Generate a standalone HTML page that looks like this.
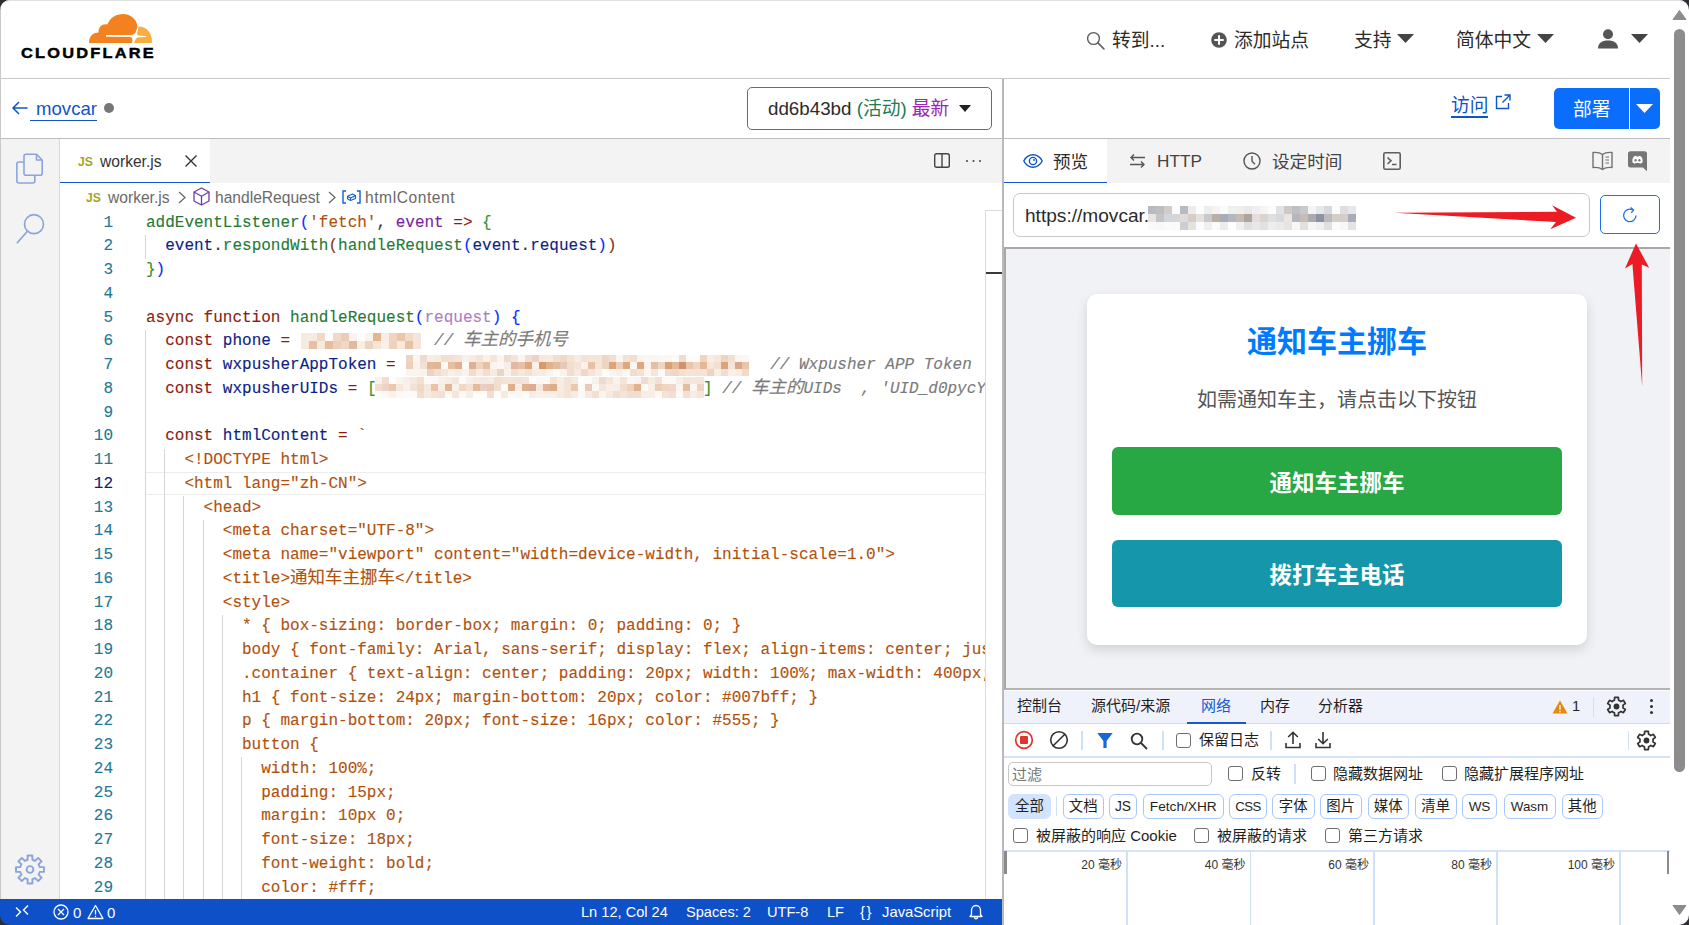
<!DOCTYPE html>
<html lang="zh-CN">
<head>
<meta charset="UTF-8">
<title>movcar - Cloudflare Workers</title>
<style>
*{box-sizing:border-box;margin:0;padding:0}
html,body{width:1689px;height:925px;overflow:hidden;background:#fff}
body{position:relative;font-family:"Liberation Sans","Noto Sans CJK SC",sans-serif;color:#313131}
.abs{position:absolute}
.t{position:absolute;white-space:nowrap;line-height:1}
svg{position:absolute;overflow:visible}
/* header */
#hdr{left:0;top:0;width:1670px;height:79px;border-bottom:1px solid #c8c8c8;background:#fff}
#sub{left:0;top:79px;width:1670px;height:60px;border-bottom:1px solid #bdbdbd;background:#fff}
.nav{font-size:18.75px;color:#2b2b2b}
/* editor */
#ed{left:0;top:139px;width:1002px;height:786px;background:#fff;overflow:hidden}
#act{left:0;top:0;width:60px;height:760px;background:#f3f3f3;border-right:1px solid #d9d9d9}
#tabs{left:60px;top:0;width:942px;height:44px;background:#f3f3f3}
#tab1{left:0;top:0;width:150px;height:44px;background:#fff;border-bottom:1.5px solid #0f55c9}
#status{left:0;top:760px;width:1002px;height:26px;background:#0e50c8;color:#fff;font-size:15px}
.code{font-family:"Liberation Mono","Noto Sans CJK SC",monospace;font-size:16px;line-height:23.75px;white-space:pre}
#ln{left:60px;top:72.6px;width:53px;text-align:right;color:#237893;-webkit-text-stroke:0.1px}
#src{left:146px;top:72.6px;width:840px;overflow:hidden;color:#b1500b;-webkit-text-stroke:0.12px}
#src i{font-style:italic;color:#7a7a7a}
.cj{font-size:17.5px;line-height:1}
.k{color:#8a1c10}.v{color:#0b2384}.f{color:#1f7a36}.s{color:#b1500b}.p{color:#7a1fa0}.o{color:#333}
.b1{color:#0431fa}.b2{color:#319331}.b3{color:#7b3814}
.g{position:absolute;width:1px;background:#d6d6d6}
/* right */
#rp{left:1004px;top:139px;width:666px;height:786px;background:#fff;overflow:hidden}
#vdiv{left:1002px;top:79px;width:2px;height:846px;background:#b9b9b9}
.dt{font-size:15px;color:#1f1f1f}
.chip{position:absolute;top:655px;height:25px;white-space:nowrap;border:1px solid #a8c7fa;border-radius:6px;font-size:14.4px;line-height:23px;text-align:center;color:#1f1f1f;background:#fff}
.cb{position:absolute;width:15px;height:15px;border:1.5px solid #6e6e6e;border-radius:3px;background:#fff}
</style>
</head>
<body>
<svg width="0" height="0" style="left:0;top:0"><defs><g id="dgear"><path d="M-2.08 -6.26L-1.85 -9.11L1.85 -9.11L2.08 -6.26A6.6 6.6 0 0 1 4.39 -4.93L4.39 -4.93L6.97 -6.16L8.82 -2.96L6.46 -1.33A6.6 6.6 0 0 1 6.46 1.33L6.46 1.33L8.82 2.96L6.97 6.16L4.39 4.93A6.6 6.6 0 0 1 2.08 6.26L2.08 6.26L1.85 9.11L-1.85 9.11L-2.08 6.26A6.6 6.6 0 0 1 -4.39 4.93L-4.39 4.93L-6.97 6.16L-8.82 2.96L-6.46 1.33A6.6 6.6 0 0 1 -6.46 -1.33L-6.46 -1.33L-8.82 -2.96L-6.97 -6.16L-4.39 -4.93A6.6 6.6 0 0 1 -2.08 -6.26Z" fill="none" stroke="#333" stroke-width="1.7" stroke-linejoin="round"/><circle r="2.9" fill="#333"/></g></defs></svg>
<!-- HEADER -->
<div id="hdr" class="abs">
  <svg style="left:89px;top:14px" width="64" height="29" viewBox="0 0 64 29">
    <path d="M0 29 C0 22 4 18.5 9.5 18.5 C9.5 13 13 9.5 18.5 10.5 C21 3.5 27 0 34 0 C42 0 48 5.5 48.5 13 L47 17 C46.5 19.5 45 20.8 42.5 20.9 L17 21.1 L17 22.8 L41 22.9 C43.5 23 44 25.5 43 29 Z" fill="#f4811f"/>
    <path d="M49.5 12.5 C57 12.5 63 18.5 63 27 L62.6 29 L45 29 C46 27 46.5 24.5 48.5 23.6 L57 23 L57 22 L49 21.6 L48 20 Z" fill="#faad3f"/>
  </svg>
  <div class="t" style="left:21px;top:46px;font-size:14.6px;font-weight:bold;letter-spacing:2px;color:#000;-webkit-text-stroke:0.45px #000;transform:scaleX(1.12);transform-origin:0 0">CLOUDFLARE</div>
  <svg style="left:1086px;top:31px" width="19" height="19" viewBox="0 0 19 19"><circle cx="7.5" cy="7.5" r="5.9" fill="none" stroke="#5c5c5c" stroke-width="1.4"/><path d="M11.9 11.9L18 18" stroke="#5c5c5c" stroke-width="1.6" stroke-linecap="round"/></svg>
  <div class="t nav" style="left:1112px;top:32px">转到...</div>
  <svg style="left:1211px;top:31.5px" width="16" height="16" viewBox="0 0 16 16"><circle cx="8" cy="8" r="7.8" fill="#555"/><path d="M8 3.3v9.4M3.3 8h9.4" stroke="#fff" stroke-width="2"/></svg>
  <div class="t nav" style="left:1234px;top:32px">添加站点</div>
  <div class="t nav" style="left:1354px;top:32px">支持</div>
  <svg style="left:1397px;top:34px" width="17" height="9" viewBox="0 0 17 9"><path d="M0 0H17L8.5 9Z" fill="#444"/></svg>
  <div class="t nav" style="left:1456px;top:32px">简体中文</div>
  <svg style="left:1537px;top:34px" width="17" height="9" viewBox="0 0 17 9"><path d="M0 0H17L8.5 9Z" fill="#444"/></svg>
  <svg style="left:1598px;top:29px" width="20" height="20" viewBox="0 0 20 20"><circle cx="10" cy="5.2" r="5" fill="#555"/><path d="M0 19.5C0 14 4 11.5 10 11.5S20 14 20 19.5Z" fill="#555"/></svg>
  <svg style="left:1631px;top:34px" width="17" height="9" viewBox="0 0 17 9"><path d="M0 0H17L8.5 9Z" fill="#444"/></svg>
</div>
<div id="sub" class="abs">
  <svg style="left:12px;top:22px" width="16" height="14" viewBox="0 0 16 14"><path d="M15.5 7H1.5M7 1L1 7L7 13" fill="none" stroke="#0f55c9" stroke-width="1.5"/></svg>
  <div class="t" style="left:36px;top:21px;font-size:18.6px;color:#0f55c9">movcar</div>
  <div class="abs" style="left:30px;top:40.5px;width:67px;height:1px;background:#0f55c9"></div>
  <div class="abs" style="left:104px;top:24px;width:10px;height:10px;border-radius:50%;background:#777"></div>
  <div class="abs" style="left:747px;top:8px;width:245px;height:43px;border:1px solid #6b6b6b;border-radius:5px;background:#fff"></div>
  <div class="t" style="left:768px;top:20.5px;font-size:18.75px;color:#2b2b2b">dd6b43bd <span style="color:#1c7c54">(活动)</span> <span style="color:#9a27b0">最新</span></div>
  <svg style="left:959px;top:26px" width="12" height="7" viewBox="0 0 12 7"><path d="M0 0H12L6 7Z" fill="#222"/></svg>
  <div class="t" style="left:1451px;top:17.5px;font-size:18.75px;color:#0f55c9">访问</div>
  <div class="abs" style="left:1451px;top:37px;width:37px;height:1.5px;background:#0f55c9"></div>
  <svg style="left:1495px;top:15px" width="16" height="16" viewBox="0 0 16 16"><path d="M7 2.5H1.5V14.5H13.5V9" fill="none" stroke="#0f55c9" stroke-width="1.4"/><path d="M9.5 1H15V6.5M15 1L7.5 8.5" fill="none" stroke="#0f55c9" stroke-width="1.4"/></svg>
  <div class="abs" style="left:1554px;top:9px;width:106px;height:41px;border-radius:5px;background:#0a6dfc"></div>
  <div class="abs" style="left:1628.6px;top:9px;width:1.1px;height:41px;background:#fff"></div>
  <div class="t" style="left:1573px;top:22px;font-size:18.75px;color:#fff">部署</div>
  <svg style="left:1636px;top:25px" width="17" height="9" viewBox="0 0 17 9"><path d="M0 0H17L8.5 9Z" fill="#fff"/></svg>
</div>
<div id="vdiv" class="abs"></div>
<!-- EDITOR -->
<div id="ed" class="abs">
  <div id="act" class="abs">
    <svg style="left:16px;top:13px" width="28" height="34" viewBox="0 0 28 34" fill="none" stroke="#8ba5db" stroke-width="1.6" stroke-linejoin="round"><rect x="0.9" y="10" width="17.9" height="21" rx="2"/><path d="M10 2.3H20.5L26.2 8V21.3A2 2 0 0 1 24.2 23.3H10A2 2 0 0 1 8 21.3V4.3A2 2 0 0 1 10 2.3Z" fill="#f3f3f3"/><path d="M20.5 2.6V8H25.9"/></svg>
    <svg style="left:16px;top:73px" width="29" height="32" viewBox="0 0 29 32" fill="none" stroke="#8ba5db" stroke-width="1.7" stroke-linecap="round"><circle cx="18" cy="12.2" r="9.5"/><path d="M11.2 19.5L1.3 30.7"/></svg>
    <svg style="left:15px;top:714.8px" width="30" height="31" viewBox="-15 -15.5 30 31" fill="none" stroke="#8ba5db" stroke-width="1.9" stroke-linejoin="round"><circle r="3.4"/><path d="M-2.38 -9.71L-2.40 -14.00L2.40 -14.00L2.38 -9.71A10.0 10.0 0 0 1 5.19 -8.55L5.19 -8.55L8.20 -11.59L11.59 -8.20L8.55 -5.19A10.0 10.0 0 0 1 9.71 -2.38L9.71 -2.38L14.00 -2.40L14.00 2.40L9.71 2.38A10.0 10.0 0 0 1 8.55 5.19L8.55 5.19L11.59 8.20L8.20 11.59L5.19 8.55A10.0 10.0 0 0 1 2.38 9.71L2.38 9.71L2.40 14.00L-2.40 14.00L-2.38 9.71A10.0 10.0 0 0 1 -5.19 8.55L-5.19 8.55L-8.20 11.59L-11.59 8.20L-8.55 5.19A10.0 10.0 0 0 1 -9.71 2.38L-9.71 2.38L-14.00 2.40L-14.00 -2.40L-9.71 -2.38A10.0 10.0 0 0 1 -8.55 -5.19L-8.55 -5.19L-11.59 -8.20L-8.20 -11.59L-5.19 -8.55A10.0 10.0 0 0 1 -2.38 -9.71Z"/></svg>
  </div>
  <div id="tabs" class="abs"><div id="tab1" class="abs"></div>
    <div class="t" style="left:18px;top:15px;font-size:12.2px;font-weight:bold;color:#a8a31e;margin-top:1.5px">JS</div>
    <div class="t" style="left:40px;top:15px;font-size:15.6px;color:#333">worker.js</div>
    <svg style="left:125px;top:16px" width="12" height="12" viewBox="0 0 12 12"><path d="M0.5 0.5L11.5 11.5M11.5 0.5L0.5 11.5" stroke="#333" stroke-width="1.4"/></svg>
    <svg style="left:874px;top:14px" width="16" height="15" viewBox="0 0 16 15" fill="none" stroke="#444" stroke-width="1.4"><rect x="0.7" y="0.7" width="14.6" height="13.6" rx="1.8"/><path d="M8 0.7V14.3"/></svg>
    <div class="abs" style="left:906px;top:21px;width:2.4px;height:2.4px;border-radius:50%;background:#444;box-shadow:6.5px 0 0 #444,13px 0 0 #444"></div>
  </div>
  <div id="bc" class="abs" style="left:60px;top:45px;width:926px;height:26px;font-size:15.6px;color:#6a6a6a">
    <div class="t" style="left:26px;top:8px;font-size:12.2px;font-weight:bold;color:#a8a31e">JS</div>
    <div class="t" style="left:48px;top:6px">worker.js</div>
    <svg style="left:118px;top:7px" width="8" height="13" viewBox="0 0 8 13"><path d="M1 1L7 6.5L1 12" fill="none" stroke="#6a6a6a" stroke-width="1.3"/></svg>
    <svg style="left:133px;top:3px" width="17" height="19" viewBox="0 0 17 19" fill="none" stroke="#6c3bb0" stroke-width="1.3" stroke-linejoin="round"><path d="M8.5 1L16 5V14L8.5 18L1 14V5Z"/><path d="M1 5L8.5 9.2L16 5M8.5 9.2V18"/></svg>
    <div class="t" style="left:155px;top:6px">handleRequest</div>
    <svg style="left:268px;top:7px" width="8" height="13" viewBox="0 0 8 13"><path d="M1 1L7 6.5L1 12" fill="none" stroke="#6a6a6a" stroke-width="1.3"/></svg>
    <svg style="left:282px;top:6px" width="19" height="14" viewBox="0 0 19 14" fill="none" stroke="#0f62c9" stroke-width="1.4"><path d="M4 1H1V13H4M15 1H18V13H15"/><path d="M5.5 6.2L10.5 4L13.5 5.8L13.5 8.6L8.5 10.6L5.5 8.8ZM5.5 6.2L8.5 8L13.5 5.8M8.5 8V10.6" stroke-width="1.1" stroke-linejoin="round"/></svg>
    <div class="t" style="left:305px;top:6px;letter-spacing:0.55px">htmlContent</div>
  </div>
  <div class="abs" style="left:145px;top:333.25px;width:841px;height:23.2px;border-top:1.5px solid #ededed;border-bottom:1.5px solid #ededed;border-left:1.5px solid #ededed"></div>
  <div class="g" style="left:145.0px;top:95.75px;height:23.75px"></div>
<div class="g" style="left:145.0px;top:190.75px;height:593.75px"></div>
<div class="g" style="left:164.0px;top:309.50px;height:475.00px"></div>
<div class="g" style="left:183.0px;top:357.00px;height:427.50px"></div>
<div class="g" style="left:202.5px;top:380.75px;height:403.75px"></div>
<div class="g" style="left:222.0px;top:475.75px;height:308.75px"></div>
<div class="g" style="left:241.0px;top:618.25px;height:166.25px"></div>

  <div id="ln" class="abs code">1
2
3
4
5
6
7
8
9
10
11
<span style="color:#0b216f">12</span>
13
14
15
16
17
18
19
20
21
22
23
24
25
26
27
28
29
30</div>
  <div id="src" class="abs code"><span class="f">addEventListener</span><span class="b1">(</span><span class="s">'fetch'</span><span class="o">,</span> <span class="p">event</span> <span class="k">=&gt;</span> <span class="b2">{</span>
  <span class="v">event</span><span class="o">.</span><span class="f">respondWith</span><span class="b3">(</span><span class="f">handleRequest</span><span class="b1">(</span><span class="v">event</span><span class="o">.</span><span class="v">request</span><span class="b1">)</span><span class="b3">)</span>
<span class="b2">}</span><span class="b1">)</span>

<span class="k">async function</span> <span class="f">handleRequest</span><span class="b1">(</span><span class="p" style="opacity:.6">request</span><span class="b1">)</span> <span class="b1">{</span>
  <span class="k">const</span> <span class="v">phone</span> <span class="k">=</span>               <i>// <span class="cj">车主的手机号</span></i>
  <span class="k">const</span> <span class="v">wxpusherAppToken</span> <span class="k">=</span>                                       <i>// Wxpusher APP Token</i>
  <span class="k">const</span> <span class="v">wxpusherUIDs</span> <span class="k">=</span> <span class="b2">[</span>                                  <span class="b2">]</span> <i>// <span class="cj">车主的</span>UIDs  , 'UID_d0pycYqmKp2rT8vXw'</i>

  <span class="k">const</span> <span class="v">htmlContent</span> <span class="k">=</span> `
    &lt;!DOCTYPE html&gt;
    &lt;html lang="zh-CN"&gt;
      &lt;head&gt;
        &lt;meta charset="UTF-8"&gt;
        &lt;meta name="viewport" content="width=device-width, initial-scale=1.0"&gt;
        &lt;title&gt;<span class="cj">通知车主挪车</span>&lt;/title&gt;
        &lt;style&gt;
          * { box-sizing: border-box; margin: 0; padding: 0; }
          body { font-family: Arial, sans-serif; display: flex; align-items: center; justify-content: center; height: 100vh; background: #f0f2f5; }
          .container { text-align: center; padding: 20px; width: 100%; max-width: 400px; border-radius: 8px; background: #fff; }
          h1 { font-size: 24px; margin-bottom: 20px; color: #007bff; }
          p { margin-bottom: 20px; font-size: 16px; color: #555; }
          button {
            width: 100%;
            padding: 15px;
            margin: 10px 0;
            font-size: 18px;
            font-weight: bold;
            color: #fff;
            border: none;</div>
  <svg style="left:301px;top:194px" width="120" height="16" viewBox="0 0 120 16" shape-rendering="crispEdges"><rect x="0" y="0" width="8" height="8" fill="#f7ebe1"/><rect x="8" y="0" width="8" height="8" fill="#f7ebe1"/><rect x="16" y="0" width="8" height="8" fill="#f1d9c8"/><rect x="24" y="0" width="8" height="8" fill="#fefcfb"/><rect x="32" y="0" width="8" height="8" fill="#f0d9c6"/><rect x="40" y="0" width="8" height="8" fill="#ecccb6"/><rect x="48" y="0" width="8" height="8" fill="#faf4f1"/><rect x="56" y="0" width="8" height="8" fill="#fdfcfa"/><rect x="64" y="0" width="8" height="8" fill="#faf3ee"/><rect x="72" y="0" width="8" height="8" fill="#e4b591"/><rect x="80" y="0" width="8" height="8" fill="#f8ece4"/><rect x="88" y="0" width="8" height="8" fill="#efd4c2"/><rect x="96" y="0" width="8" height="8" fill="#e9c5a9"/><rect x="104" y="0" width="8" height="8" fill="#f0dac8"/><rect x="112" y="0" width="8" height="8" fill="#f4e6de"/><rect x="0" y="8" width="8" height="8" fill="#f7ebe1"/><rect x="8" y="8" width="8" height="8" fill="#e7bfa2"/><rect x="16" y="8" width="8" height="8" fill="#f6e9de"/><rect x="24" y="8" width="8" height="8" fill="#e7bd9d"/><rect x="32" y="8" width="8" height="8" fill="#edd0bb"/><rect x="40" y="8" width="8" height="8" fill="#f1d8c5"/><rect x="48" y="8" width="8" height="8" fill="#e1b9a2"/><rect x="56" y="8" width="8" height="8" fill="#f8eee5"/><rect x="64" y="8" width="8" height="8" fill="#eed4bf"/><rect x="72" y="8" width="8" height="8" fill="#f5e6da"/><rect x="80" y="8" width="8" height="8" fill="#f9f0e8"/><rect x="88" y="8" width="8" height="8" fill="#eed2be"/><rect x="96" y="8" width="8" height="8" fill="#f6e9de"/><rect x="104" y="8" width="8" height="8" fill="#e8c2a4"/><rect x="112" y="8" width="8" height="8" fill="#f5e4d7"/></svg><svg style="left:406px;top:216px" width="343" height="21" viewBox="0 0 343 21" shape-rendering="crispEdges"><rect x="0" y="0" width="7" height="7" fill="#efd5c0"/><rect x="7" y="0" width="7" height="7" fill="#fbf5f1"/><rect x="14" y="0" width="7" height="7" fill="#efdacf"/><rect x="21" y="0" width="7" height="7" fill="#f8eee7"/><rect x="28" y="0" width="7" height="7" fill="#f7eae0"/><rect x="35" y="0" width="7" height="7" fill="#f3dfcf"/><rect x="42" y="0" width="7" height="7" fill="#f3e0d2"/><rect x="49" y="0" width="7" height="7" fill="#f5e5d9"/><rect x="56" y="0" width="7" height="7" fill="#f9f0e9"/><rect x="63" y="0" width="7" height="7" fill="#f7eae0"/><rect x="70" y="0" width="7" height="7" fill="#f4e3d6"/><rect x="77" y="0" width="7" height="7" fill="#f9f1ea"/><rect x="84" y="0" width="7" height="7" fill="#f5e4d7"/><rect x="91" y="0" width="7" height="7" fill="#fbf5f0"/><rect x="98" y="0" width="7" height="7" fill="#efdacf"/><rect x="105" y="0" width="7" height="7" fill="#f5e5d8"/><rect x="112" y="0" width="7" height="7" fill="#fbf5f1"/><rect x="119" y="0" width="7" height="7" fill="#f1ddd3"/><rect x="126" y="0" width="7" height="7" fill="#ecd3c5"/><rect x="133" y="0" width="7" height="7" fill="#f6e8dd"/><rect x="140" y="0" width="7" height="7" fill="#f7eae0"/><rect x="147" y="0" width="7" height="7" fill="#f3dfd2"/><rect x="154" y="0" width="7" height="7" fill="#f0d8c7"/><rect x="161" y="0" width="7" height="7" fill="#f4e2d5"/><rect x="168" y="0" width="7" height="7" fill="#f8ece2"/><rect x="175" y="0" width="7" height="7" fill="#f4e2d4"/><rect x="182" y="0" width="7" height="7" fill="#f5e4d8"/><rect x="189" y="0" width="7" height="7" fill="#f5e5d8"/><rect x="196" y="0" width="7" height="7" fill="#edd5c7"/><rect x="203" y="0" width="7" height="7" fill="#f3dfd1"/><rect x="210" y="0" width="7" height="7" fill="#fbf6f1"/><rect x="217" y="0" width="7" height="7" fill="#f4e2d5"/><rect x="224" y="0" width="7" height="7" fill="#f2decd"/><rect x="231" y="0" width="7" height="7" fill="#faf3ee"/><rect x="238" y="0" width="7" height="7" fill="#fbf6f2"/><rect x="245" y="0" width="7" height="7" fill="#fbf6f2"/><rect x="252" y="0" width="7" height="7" fill="#fcf8f5"/><rect x="259" y="0" width="7" height="7" fill="#fcf7f3"/><rect x="266" y="0" width="7" height="7" fill="#fdfbf9"/><rect x="273" y="0" width="7" height="7" fill="#f2ddcc"/><rect x="280" y="0" width="7" height="7" fill="#fdfbf9"/><rect x="287" y="0" width="7" height="7" fill="#fdfcfb"/><rect x="294" y="0" width="7" height="7" fill="#efd5c1"/><rect x="301" y="0" width="7" height="7" fill="#f7ece6"/><rect x="308" y="0" width="7" height="7" fill="#f6e7dc"/><rect x="315" y="0" width="7" height="7" fill="#efd5c1"/><rect x="322" y="0" width="7" height="7" fill="#f3e0d2"/><rect x="329" y="0" width="7" height="7" fill="#fbf4ef"/><rect x="336" y="0" width="7" height="7" fill="#fcf7f4"/><rect x="0" y="7" width="7" height="7" fill="#edd0b9"/><rect x="7" y="7" width="7" height="7" fill="#f9f1ec"/><rect x="14" y="7" width="7" height="7" fill="#f3e1d3"/><rect x="21" y="7" width="7" height="7" fill="#e4b797"/><rect x="28" y="7" width="7" height="7" fill="#e3b595"/><rect x="35" y="7" width="7" height="7" fill="#fcf9f6"/><rect x="42" y="7" width="7" height="7" fill="#e6bfa0"/><rect x="49" y="7" width="7" height="7" fill="#e1b08b"/><rect x="56" y="7" width="7" height="7" fill="#fdfaf8"/><rect x="63" y="7" width="7" height="7" fill="#ddaf95"/><rect x="70" y="7" width="7" height="7" fill="#efd4bf"/><rect x="77" y="7" width="7" height="7" fill="#e7c0a3"/><rect x="84" y="7" width="7" height="7" fill="#faf4ee"/><rect x="91" y="7" width="7" height="7" fill="#fcf7f4"/><rect x="98" y="7" width="7" height="7" fill="#f8ede5"/><rect x="105" y="7" width="7" height="7" fill="#e1b9a3"/><rect x="112" y="7" width="7" height="7" fill="#e8c1a5"/><rect x="119" y="7" width="7" height="7" fill="#dfa87c"/><rect x="126" y="7" width="7" height="7" fill="#f9f0ea"/><rect x="133" y="7" width="7" height="7" fill="#d89867"/><rect x="140" y="7" width="7" height="7" fill="#e1b18b"/><rect x="147" y="7" width="7" height="7" fill="#e6bb9a"/><rect x="154" y="7" width="7" height="7" fill="#e8c8b7"/><rect x="161" y="7" width="7" height="7" fill="#f2dece"/><rect x="168" y="7" width="7" height="7" fill="#f4e4d7"/><rect x="175" y="7" width="7" height="7" fill="#f9f1eb"/><rect x="182" y="7" width="7" height="7" fill="#e8c1a2"/><rect x="189" y="7" width="7" height="7" fill="#f4e5dc"/><rect x="196" y="7" width="7" height="7" fill="#efd4c2"/><rect x="203" y="7" width="7" height="7" fill="#dea578"/><rect x="210" y="7" width="7" height="7" fill="#edcfb9"/><rect x="217" y="7" width="7" height="7" fill="#dea87f"/><rect x="224" y="7" width="7" height="7" fill="#fbf6f2"/><rect x="231" y="7" width="7" height="7" fill="#dea67f"/><rect x="238" y="7" width="7" height="7" fill="#faf3ed"/><rect x="245" y="7" width="7" height="7" fill="#e6bea0"/><rect x="252" y="7" width="7" height="7" fill="#efd6c3"/><rect x="259" y="7" width="7" height="7" fill="#dca172"/><rect x="266" y="7" width="7" height="7" fill="#e4b997"/><rect x="273" y="7" width="7" height="7" fill="#d1916e"/><rect x="280" y="7" width="7" height="7" fill="#eac7ac"/><rect x="287" y="7" width="7" height="7" fill="#efd5c2"/><rect x="294" y="7" width="7" height="7" fill="#e4b895"/><rect x="301" y="7" width="7" height="7" fill="#f5e6d9"/><rect x="308" y="7" width="7" height="7" fill="#f3e0d1"/><rect x="315" y="7" width="7" height="7" fill="#dca479"/><rect x="322" y="7" width="7" height="7" fill="#f4e3d7"/><rect x="329" y="7" width="7" height="7" fill="#daa78a"/><rect x="336" y="7" width="7" height="7" fill="#e9c5a9"/><rect x="0" y="14" width="7" height="7" fill="#fbf5f1"/><rect x="7" y="14" width="7" height="7" fill="#fbf4ee"/><rect x="14" y="14" width="7" height="7" fill="#faf3ed"/><rect x="21" y="14" width="7" height="7" fill="#ecd2c4"/><rect x="28" y="14" width="7" height="7" fill="#f2ddcf"/><rect x="35" y="14" width="7" height="7" fill="#f5e6d9"/><rect x="42" y="14" width="7" height="7" fill="#f9efe8"/><rect x="49" y="14" width="7" height="7" fill="#f7ece3"/><rect x="56" y="14" width="7" height="7" fill="#faf3ed"/><rect x="63" y="14" width="7" height="7" fill="#f2ddcc"/><rect x="70" y="14" width="7" height="7" fill="#f7ebe2"/><rect x="77" y="14" width="7" height="7" fill="#f3ded0"/><rect x="84" y="14" width="7" height="7" fill="#f7ebe2"/><rect x="91" y="14" width="7" height="7" fill="#eed4bf"/><rect x="98" y="14" width="7" height="7" fill="#f9f1eb"/><rect x="105" y="14" width="7" height="7" fill="#f3e0d1"/><rect x="112" y="14" width="7" height="7" fill="#f6e8dd"/><rect x="119" y="14" width="7" height="7" fill="#f3e1d3"/><rect x="126" y="14" width="7" height="7" fill="#f7ebe2"/><rect x="133" y="14" width="7" height="7" fill="#f8ede4"/><rect x="140" y="14" width="7" height="7" fill="#faf2ec"/><rect x="147" y="14" width="7" height="7" fill="#fcf9f7"/><rect x="154" y="14" width="7" height="7" fill="#faf3ed"/><rect x="161" y="14" width="7" height="7" fill="#f2ddce"/><rect x="168" y="14" width="7" height="7" fill="#f7eae0"/><rect x="175" y="14" width="7" height="7" fill="#f0d8c4"/><rect x="182" y="14" width="7" height="7" fill="#f3e4dc"/><rect x="189" y="14" width="7" height="7" fill="#f8ede5"/><rect x="196" y="14" width="7" height="7" fill="#fefdfc"/><rect x="203" y="14" width="7" height="7" fill="#fbf5f0"/><rect x="210" y="14" width="7" height="7" fill="#f9efe9"/><rect x="217" y="14" width="7" height="7" fill="#fcf8f5"/><rect x="224" y="14" width="7" height="7" fill="#f0ddd2"/><rect x="231" y="14" width="7" height="7" fill="#f2e1d8"/><rect x="238" y="14" width="7" height="7" fill="#fbf6f2"/><rect x="245" y="14" width="7" height="7" fill="#f4e6de"/><rect x="252" y="14" width="7" height="7" fill="#fdf9f7"/><rect x="259" y="14" width="7" height="7" fill="#f0dbd0"/><rect x="266" y="14" width="7" height="7" fill="#eed7ca"/><rect x="273" y="14" width="7" height="7" fill="#f3e0d1"/><rect x="280" y="14" width="7" height="7" fill="#f5e4d7"/><rect x="287" y="14" width="7" height="7" fill="#f5e3d6"/><rect x="294" y="14" width="7" height="7" fill="#f4e3d6"/><rect x="301" y="14" width="7" height="7" fill="#efd3be"/><rect x="308" y="14" width="7" height="7" fill="#f8ede5"/><rect x="315" y="14" width="7" height="7" fill="#f0ddd2"/><rect x="322" y="14" width="7" height="7" fill="#f8efea"/><rect x="329" y="14" width="7" height="7" fill="#f8ede5"/><rect x="336" y="14" width="7" height="7" fill="#f1daca"/></svg><svg style="left:375px;top:238px" width="329" height="21" viewBox="0 0 329 21" shape-rendering="crispEdges"><rect x="0" y="0" width="7" height="7" fill="#f9f1ed"/><rect x="7" y="0" width="7" height="7" fill="#f2ddcc"/><rect x="14" y="0" width="7" height="7" fill="#fefdfd"/><rect x="21" y="0" width="7" height="7" fill="#fbf5f0"/><rect x="28" y="0" width="7" height="7" fill="#f9efe8"/><rect x="35" y="0" width="7" height="7" fill="#f6e8de"/><rect x="42" y="0" width="7" height="7" fill="#f3e0d1"/><rect x="49" y="0" width="7" height="7" fill="#fdf9f7"/><rect x="56" y="0" width="7" height="7" fill="#fbf7f5"/><rect x="63" y="0" width="7" height="7" fill="#f9f0ea"/><rect x="70" y="0" width="7" height="7" fill="#f7ebe2"/><rect x="77" y="0" width="7" height="7" fill="#f5e5da"/><rect x="84" y="0" width="7" height="7" fill="#fcf9f6"/><rect x="91" y="0" width="7" height="7" fill="#f9f0e9"/><rect x="98" y="0" width="7" height="7" fill="#f7eae0"/><rect x="105" y="0" width="7" height="7" fill="#f5e9e2"/><rect x="112" y="0" width="7" height="7" fill="#f7ebe2"/><rect x="119" y="0" width="7" height="7" fill="#f2decf"/><rect x="126" y="0" width="7" height="7" fill="#f4e2d5"/><rect x="133" y="0" width="7" height="7" fill="#f5e4d6"/><rect x="140" y="0" width="7" height="7" fill="#f3e1d3"/><rect x="147" y="0" width="7" height="7" fill="#f4e5dc"/><rect x="154" y="0" width="7" height="7" fill="#fefcfb"/><rect x="161" y="0" width="7" height="7" fill="#fcf8f6"/><rect x="168" y="0" width="7" height="7" fill="#fdfaf8"/><rect x="175" y="0" width="7" height="7" fill="#f4e2d5"/><rect x="182" y="0" width="7" height="7" fill="#f8eee6"/><rect x="189" y="0" width="7" height="7" fill="#f3e2d9"/><rect x="196" y="0" width="7" height="7" fill="#f5e9e2"/><rect x="203" y="0" width="7" height="7" fill="#fefdfd"/><rect x="210" y="0" width="7" height="7" fill="#fdfaf7"/><rect x="217" y="0" width="7" height="7" fill="#f9f0e9"/><rect x="224" y="0" width="7" height="7" fill="#efdace"/><rect x="231" y="0" width="7" height="7" fill="#f5e6db"/><rect x="238" y="0" width="7" height="7" fill="#faf2ed"/><rect x="245" y="0" width="7" height="7" fill="#f5e5d9"/><rect x="252" y="0" width="7" height="7" fill="#fbf5f1"/><rect x="259" y="0" width="7" height="7" fill="#faf2ec"/><rect x="266" y="0" width="7" height="7" fill="#f0dbd0"/><rect x="273" y="0" width="7" height="7" fill="#f7eadf"/><rect x="280" y="0" width="7" height="7" fill="#f2e0d6"/><rect x="287" y="0" width="7" height="7" fill="#fcf9f6"/><rect x="294" y="0" width="7" height="7" fill="#fcf9f6"/><rect x="301" y="0" width="7" height="7" fill="#f8eee6"/><rect x="308" y="0" width="7" height="7" fill="#f5e4d8"/><rect x="315" y="0" width="7" height="7" fill="#f6e8dd"/><rect x="322" y="0" width="7" height="7" fill="#f5e6da"/><rect x="0" y="7" width="7" height="7" fill="#f2ddce"/><rect x="7" y="7" width="7" height="7" fill="#ecd3c5"/><rect x="14" y="7" width="7" height="7" fill="#eac8ae"/><rect x="21" y="7" width="7" height="7" fill="#f6e8dc"/><rect x="28" y="7" width="7" height="7" fill="#faf1eb"/><rect x="35" y="7" width="7" height="7" fill="#f4e2d5"/><rect x="42" y="7" width="7" height="7" fill="#f0d8c6"/><rect x="49" y="7" width="7" height="7" fill="#f5e7e0"/><rect x="56" y="7" width="7" height="7" fill="#e9c3a9"/><rect x="63" y="7" width="7" height="7" fill="#f8ece3"/><rect x="70" y="7" width="7" height="7" fill="#e3b595"/><rect x="77" y="7" width="7" height="7" fill="#faf1eb"/><rect x="84" y="7" width="7" height="7" fill="#f0d8c5"/><rect x="91" y="7" width="7" height="7" fill="#f4e3d5"/><rect x="98" y="7" width="7" height="7" fill="#e5bb9c"/><rect x="105" y="7" width="7" height="7" fill="#eacebf"/><rect x="112" y="7" width="7" height="7" fill="#e9cbba"/><rect x="119" y="7" width="7" height="7" fill="#f2dece"/><rect x="126" y="7" width="7" height="7" fill="#fdf9f6"/><rect x="133" y="7" width="7" height="7" fill="#e1ae8b"/><rect x="140" y="7" width="7" height="7" fill="#f8ede4"/><rect x="147" y="7" width="7" height="7" fill="#e1b08d"/><rect x="154" y="7" width="7" height="7" fill="#dcac92"/><rect x="161" y="7" width="7" height="7" fill="#f6e7dc"/><rect x="168" y="7" width="7" height="7" fill="#e3b493"/><rect x="175" y="7" width="7" height="7" fill="#e0ac83"/><rect x="182" y="7" width="7" height="7" fill="#f8ece4"/><rect x="189" y="7" width="7" height="7" fill="#f4e4d7"/><rect x="196" y="7" width="7" height="7" fill="#ebc8ad"/><rect x="203" y="7" width="7" height="7" fill="#fdfaf7"/><rect x="210" y="7" width="7" height="7" fill="#e8cab9"/><rect x="217" y="7" width="7" height="7" fill="#fcf8f5"/><rect x="224" y="7" width="7" height="7" fill="#f5e5da"/><rect x="231" y="7" width="7" height="7" fill="#f9efe7"/><rect x="238" y="7" width="7" height="7" fill="#f8eee9"/><rect x="245" y="7" width="7" height="7" fill="#f2ddcc"/><rect x="252" y="7" width="7" height="7" fill="#edd1bc"/><rect x="259" y="7" width="7" height="7" fill="#e1b28d"/><rect x="266" y="7" width="7" height="7" fill="#fdfaf8"/><rect x="273" y="7" width="7" height="7" fill="#f9efe7"/><rect x="280" y="7" width="7" height="7" fill="#ecccb4"/><rect x="287" y="7" width="7" height="7" fill="#efd5c0"/><rect x="294" y="7" width="7" height="7" fill="#eed7cb"/><rect x="301" y="7" width="7" height="7" fill="#fbf5f1"/><rect x="308" y="7" width="7" height="7" fill="#e5bc9c"/><rect x="315" y="7" width="7" height="7" fill="#fbf6f3"/><rect x="322" y="7" width="7" height="7" fill="#eed4c0"/><rect x="0" y="14" width="7" height="7" fill="#fdfbf9"/><rect x="7" y="14" width="7" height="7" fill="#fbf7f4"/><rect x="14" y="14" width="7" height="7" fill="#faf1eb"/><rect x="21" y="14" width="7" height="7" fill="#fcf8f6"/><rect x="28" y="14" width="7" height="7" fill="#fdfbf9"/><rect x="35" y="14" width="7" height="7" fill="#fefcfb"/><rect x="42" y="14" width="7" height="7" fill="#f2dccb"/><rect x="49" y="14" width="7" height="7" fill="#f7eae0"/><rect x="56" y="14" width="7" height="7" fill="#f5e4d6"/><rect x="63" y="14" width="7" height="7" fill="#f2e0d6"/><rect x="70" y="14" width="7" height="7" fill="#fdfaf8"/><rect x="77" y="14" width="7" height="7" fill="#f5e6db"/><rect x="84" y="14" width="7" height="7" fill="#fcf9f6"/><rect x="91" y="14" width="7" height="7" fill="#f8eee7"/><rect x="98" y="14" width="7" height="7" fill="#fefcfb"/><rect x="105" y="14" width="7" height="7" fill="#fefefd"/><rect x="112" y="14" width="7" height="7" fill="#f3dfd0"/><rect x="119" y="14" width="7" height="7" fill="#fdfcfa"/><rect x="126" y="14" width="7" height="7" fill="#f7eae0"/><rect x="133" y="14" width="7" height="7" fill="#fdfaf8"/><rect x="140" y="14" width="7" height="7" fill="#fcf7f3"/><rect x="147" y="14" width="7" height="7" fill="#fefcfc"/><rect x="154" y="14" width="7" height="7" fill="#f8ede4"/><rect x="161" y="14" width="7" height="7" fill="#f9f0ec"/><rect x="168" y="14" width="7" height="7" fill="#f8efe7"/><rect x="175" y="14" width="7" height="7" fill="#f9f0e9"/><rect x="182" y="14" width="7" height="7" fill="#f6e9de"/><rect x="189" y="14" width="7" height="7" fill="#f5e4d6"/><rect x="196" y="14" width="7" height="7" fill="#f7ece3"/><rect x="203" y="14" width="7" height="7" fill="#fcf8f5"/><rect x="210" y="14" width="7" height="7" fill="#f7eadf"/><rect x="217" y="14" width="7" height="7" fill="#f3dfd2"/><rect x="224" y="14" width="7" height="7" fill="#fbf5f1"/><rect x="231" y="14" width="7" height="7" fill="#f7e9e0"/><rect x="238" y="14" width="7" height="7" fill="#f1ded3"/><rect x="245" y="14" width="7" height="7" fill="#f5e4d7"/><rect x="252" y="14" width="7" height="7" fill="#f1ded3"/><rect x="259" y="14" width="7" height="7" fill="#f0ddd2"/><rect x="266" y="14" width="7" height="7" fill="#f8ece4"/><rect x="273" y="14" width="7" height="7" fill="#f8eee7"/><rect x="280" y="14" width="7" height="7" fill="#fdfaf8"/><rect x="287" y="14" width="7" height="7" fill="#f5e3d6"/><rect x="294" y="14" width="7" height="7" fill="#f3dfd0"/><rect x="301" y="14" width="7" height="7" fill="#fcf8f5"/><rect x="308" y="14" width="7" height="7" fill="#f3e0d1"/><rect x="315" y="14" width="7" height="7" fill="#f8ece4"/><rect x="322" y="14" width="7" height="7" fill="#f5e6da"/></svg>
  <div id="ruler" class="abs" style="left:985px;top:71px;width:17px;height:689px;border-left:1px solid #dcdcdc;border-top:1px solid #dcdcdc;background:#fff"></div>
  <div class="abs" style="left:986px;top:133px;width:16px;height:2px;background:#3a3a3a"></div>
  <div id="status" class="abs">
    <svg style="left:15px;top:6px" width="14" height="14" viewBox="0 0 14 14" fill="none" stroke="#fff" stroke-width="1.4"><path d="M1 5L5.5 9.5L1 14" transform="translate(0 -2.5)"/><path d="M13 0L8.5 4.5L13 9" transform="translate(0 0.5)"/></svg>
    <svg style="left:53px;top:5px" width="16" height="16" viewBox="0 0 16 16" fill="none" stroke="#fff" stroke-width="1.3"><circle cx="8" cy="8" r="7"/><path d="M5 5L11 11M11 5L5 11"/></svg>
    <div class="t" style="left:73px;top:6px">0</div>
    <svg style="left:87px;top:5px" width="17" height="16" viewBox="0 0 17 16" fill="none" stroke="#fff" stroke-width="1.3" stroke-linejoin="round"><path d="M8.5 1.5L16 14.5H1Z"/><path d="M8.5 6V10.5M8.5 11.8V13.2"/></svg>
    <div class="t" style="left:107px;top:6px">0</div>
    <div class="t" style="left:581px;top:6px;font-size:14.6px">Ln 12, Col 24</div>
    <div class="t" style="left:686px;top:6px;font-size:14.6px">Spaces: 2</div>
    <div class="t" style="left:767px;top:6px;font-size:14.6px">UTF-8</div>
    <div class="t" style="left:827px;top:6px;font-size:14.6px">LF</div>
    <div class="t" style="left:860px;top:5px;font-size:15px;letter-spacing:1.5px">{}</div><div class="t" style="left:882px;top:6px;font-size:14.8px">JavaScript</div>
    <svg style="left:969px;top:5px" width="14" height="16" viewBox="0 0 14 16" fill="none" stroke="#fff" stroke-width="1.3" stroke-linejoin="round"><path d="M1 12.5H13L11.5 10.5V6.5C11.5 3.5 9.5 1.5 7 1.5S2.5 3.5 2.5 6.5V10.5Z"/><path d="M5.5 12.7C5.5 14 6 14.8 7 14.8S8.5 14 8.5 12.7"/></svg>
  </div>
</div>
<!-- RIGHT PANE -->
<div id="rp" class="abs">
  <div class="abs" style="left:0;top:0;width:666px;height:44px;background:#f3f3f3"></div>
  <div class="abs" style="left:0;top:0;width:103px;height:44px;background:#fff;border-bottom:1.5px solid #0f55c9"></div>
  <svg style="left:19px;top:15px" width="20" height="14" viewBox="0 0 20 14" fill="none" stroke="#0f55c9" stroke-width="1.4"><path d="M0.8 7C3 2.8 6.2 0.8 10 0.8S17 2.8 19.2 7C17 11.2 13.8 13.2 10 13.2S3 11.2 0.8 7Z"/><circle cx="10" cy="7" r="3.6"/><circle cx="11" cy="6" r="0.9" fill="#0f55c9" stroke="none"/></svg>
  <div class="t" style="left:49px;top:14.5px;font-size:17.6px;color:#2b2b2b">预览</div>
  <svg style="left:125px;top:15px" width="17" height="14" viewBox="0 0 17 14" fill="none" stroke="#555" stroke-width="1.4"><path d="M16 3.5H2M5 0.5L2 3.5L5 6.5"/><path d="M1 10.5H15M12 7.5L15 10.5L12 13.5"/></svg>
  <div class="t" style="left:153px;top:14px;font-size:17.2px;color:#444">HTTP</div>
  <svg style="left:239px;top:13px" width="18" height="18" viewBox="0 0 18 18" fill="none" stroke="#555" stroke-width="1.4"><circle cx="9" cy="9" r="8"/><path d="M9 4V9.3L12 12.3"/></svg>
  <div class="t" style="left:268px;top:14.5px;font-size:17.6px;color:#444">设定时间</div>
  <svg style="left:379px;top:13px" width="18" height="18" viewBox="0 0 18 18" fill="none" stroke="#5e5e5e" stroke-width="1.6"><rect x="0.8" y="0.8" width="16.4" height="16.4" rx="1.5"/><path d="M4.5 5.5L8 8.8L4.5 12M9 12.5H13.5"/></svg>
  <svg style="left:588px;top:12px" width="21" height="20" viewBox="0 0 21 20" fill="none" stroke="#707070" stroke-width="1.4" stroke-linejoin="round"><path d="M10.5 3.5C8 1.5 4.5 1.2 1 1.5V16.5C4.5 16.2 8 16.5 10.5 18.5C13 16.5 16.5 16.2 20 16.5V1.5C16.5 1.2 13 1.5 10.5 3.5ZM10.5 3.5V18.5"/><path d="M13.5 6H17M13.5 9H17M13.5 12H17" stroke-width="1.1"/></svg>
  <svg style="left:624px;top:12px" width="19" height="20.5" viewBox="0 0 21 22"><path d="M2.5 0H18.5C19.9 0 21 1.1 21 2.5V22L16.5 18H2.5C1.1 18 0 16.9 0 15.5V2.5C0 1.1 1.1 0 2.5 0Z" fill="#767676"/><path d="M5 12.5C4.5 10 5 7.5 6.5 5.8C7.5 5.3 8.3 5.1 9 5L9.4 5.8H11.6L12 5C12.7 5.1 13.5 5.3 14.5 5.8C16 7.5 16.5 10 16 12.5C15 13.2 14.2 13.6 13.2 13.8L12.6 12.8H8.4L7.8 13.8C6.8 13.6 6 13.2 5 12.5Z" fill="#fff"/><ellipse cx="8.4" cy="9.8" rx="1.2" ry="1.4" fill="#767676"/><ellipse cx="12.6" cy="9.8" rx="1.2" ry="1.4" fill="#767676"/></svg>
  <!-- url bar -->
  <div class="abs" style="left:9px;top:54px;width:577px;height:44px;border:1px solid #c9c9c9;border-radius:7px;background:#fff"></div>
  <div class="t" style="left:21px;top:67px;font-size:19.1px;color:#2b2b2b">https://movcar.</div>
  <div id="urlblur" class="abs" style="left:144px;top:67px;width:204px;height:24px"><svg style="left:0;top:0" width="208" height="24" viewBox="0 0 208 24" shape-rendering="crispEdges"><rect x="0" y="0" width="8" height="8" fill="#b8bac2"/><rect x="8" y="0" width="8" height="8" fill="#bebec2"/><rect x="16" y="0" width="8" height="8" fill="#d2cbc7"/><rect x="24" y="0" width="8" height="8" fill="#fbfbfb"/><rect x="32" y="0" width="8" height="8" fill="#b8bac3"/><rect x="40" y="0" width="8" height="8" fill="#eeebea"/><rect x="48" y="0" width="8" height="8" fill="#fdfdfd"/><rect x="56" y="0" width="8" height="8" fill="#eeeeef"/><rect x="64" y="0" width="8" height="8" fill="#f6f4f3"/><rect x="72" y="0" width="8" height="8" fill="#fcfbfb"/><rect x="80" y="0" width="8" height="8" fill="#eff0f1"/><rect x="88" y="0" width="8" height="8" fill="#f0edeb"/><rect x="96" y="0" width="8" height="8" fill="#e8e8eb"/><rect x="104" y="0" width="8" height="8" fill="#efeff1"/><rect x="112" y="0" width="8" height="8" fill="#f6f4f4"/><rect x="120" y="0" width="8" height="8" fill="#fcfcfc"/><rect x="128" y="0" width="8" height="8" fill="#e1e2e5"/><rect x="136" y="0" width="8" height="8" fill="#d0c8c4"/><rect x="144" y="0" width="8" height="8" fill="#bdbfc7"/><rect x="152" y="0" width="8" height="8" fill="#c7c9cf"/><rect x="160" y="0" width="8" height="8" fill="#f6f4f3"/><rect x="168" y="0" width="8" height="8" fill="#e7e7ea"/><rect x="176" y="0" width="8" height="8" fill="#d8d9dd"/><rect x="184" y="0" width="8" height="8" fill="#fcfcfc"/><rect x="192" y="0" width="8" height="8" fill="#dddee2"/><rect x="200" y="0" width="8" height="8" fill="#e6e7ea"/><rect x="0" y="8" width="8" height="8" fill="#e8e4e1"/><rect x="8" y="8" width="8" height="8" fill="#c4c4c8"/><rect x="16" y="8" width="8" height="8" fill="#d4d5da"/><rect x="24" y="8" width="8" height="8" fill="#d5d6db"/><rect x="32" y="8" width="8" height="8" fill="#e0dbd8"/><rect x="40" y="8" width="8" height="8" fill="#d5cdc7"/><rect x="48" y="8" width="8" height="8" fill="#e5e0dd"/><rect x="56" y="8" width="8" height="8" fill="#c8cad0"/><rect x="64" y="8" width="8" height="8" fill="#bbaea5"/><rect x="72" y="8" width="8" height="8" fill="#a9acb6"/><rect x="80" y="8" width="8" height="8" fill="#b4b7bf"/><rect x="88" y="8" width="8" height="8" fill="#c6bbb3"/><rect x="96" y="8" width="8" height="8" fill="#b0a39c"/><rect x="104" y="8" width="8" height="8" fill="#e3dedb"/><rect x="112" y="8" width="8" height="8" fill="#dad4d1"/><rect x="120" y="8" width="8" height="8" fill="#dfdfe1"/><rect x="128" y="8" width="8" height="8" fill="#d7d9dd"/><rect x="136" y="8" width="8" height="8" fill="#e9e5e2"/><rect x="144" y="8" width="8" height="8" fill="#b6b6bb"/><rect x="152" y="8" width="8" height="8" fill="#c7bdb8"/><rect x="160" y="8" width="8" height="8" fill="#aaaaaf"/><rect x="168" y="8" width="8" height="8" fill="#8f92a0"/><rect x="176" y="8" width="8" height="8" fill="#bcbcc0"/><rect x="184" y="8" width="8" height="8" fill="#d5cdc7"/><rect x="192" y="8" width="8" height="8" fill="#d5cdc7"/><rect x="200" y="8" width="8" height="8" fill="#a9acb6"/><rect x="0" y="16" width="8" height="8" fill="#f9f9f8"/><rect x="8" y="16" width="8" height="8" fill="#f8f8f9"/><rect x="16" y="16" width="8" height="8" fill="#fbfbfb"/><rect x="24" y="16" width="8" height="8" fill="#fafafb"/><rect x="32" y="16" width="8" height="8" fill="#ccced3"/><rect x="40" y="16" width="8" height="8" fill="#e5e1dd"/><rect x="48" y="16" width="8" height="8" fill="#fbfbfa"/><rect x="56" y="16" width="8" height="8" fill="#f1eeed"/><rect x="64" y="16" width="8" height="8" fill="#fbfbfc"/><rect x="72" y="16" width="8" height="8" fill="#ececed"/><rect x="80" y="16" width="8" height="8" fill="#fefefe"/><rect x="88" y="16" width="8" height="8" fill="#f0f0f2"/><rect x="96" y="16" width="8" height="8" fill="#dfe0e4"/><rect x="104" y="16" width="8" height="8" fill="#e7e8ea"/><rect x="112" y="16" width="8" height="8" fill="#e4e0de"/><rect x="120" y="16" width="8" height="8" fill="#ededef"/><rect x="128" y="16" width="8" height="8" fill="#ece9e7"/><rect x="136" y="16" width="8" height="8" fill="#e7e3e1"/><rect x="144" y="16" width="8" height="8" fill="#f6f7f8"/><rect x="152" y="16" width="8" height="8" fill="#e5e0dc"/><rect x="160" y="16" width="8" height="8" fill="#f6f6f7"/><rect x="168" y="16" width="8" height="8" fill="#eff0f2"/><rect x="176" y="16" width="8" height="8" fill="#e3dedc"/><rect x="184" y="16" width="8" height="8" fill="#fbfbfc"/><rect x="192" y="16" width="8" height="8" fill="#f7f7f7"/><rect x="200" y="16" width="8" height="8" fill="#e2e3e6"/></svg></div>
  <div class="abs" style="left:596px;top:56px;width:60px;height:39px;border:1.5px solid #1e6fe8;border-radius:5px;background:#fff"></div>
  <svg style="left:617px;top:67px" width="18" height="18" viewBox="0 0 18 18" fill="none" stroke="#1e6fe8" stroke-width="1.3"><path d="M15 9.6A6.2 6.2 0 1 1 11.6 3.9"/><path d="M9.6 1.4L12.6 4L10.2 6.8" stroke-linejoin="round"/></svg>
  <!-- iframe -->
  <div class="abs" style="left:0;top:108px;width:667px;height:443px;background:#f0f2f5;border-top:2px solid #a8a8a8;border-left:2px solid #a8a8a8;border-bottom:2px solid #b4b4b4"></div>
  <div class="abs" style="left:83px;top:155px;width:500px;height:351px;border-radius:10px;background:#fff;box-shadow:0 5px 12px rgba(0,0,0,.13)"></div>
  <div class="t" style="left:83px;width:500px;text-align:center;top:188px;font-size:30px;font-weight:bold;color:#007bff">通知车主挪车</div>
  <div class="t" style="left:83px;width:500px;text-align:center;top:250.5px;font-size:20px;color:#555">如需通知车主，请点击以下按钮</div>
  <div class="abs" style="left:108px;top:308px;width:450px;height:68px;border-radius:6px;background:#28a745"></div>
  <div class="t" style="left:108px;width:450px;text-align:center;top:333.5px;font-size:22.5px;font-weight:bold;color:#fff">通知车主挪车</div>
  <div class="abs" style="left:108px;top:401px;width:450px;height:67px;border-radius:6px;background:#1596ab"></div>
  <div class="t" style="left:108px;width:450px;text-align:center;top:425.5px;font-size:22.5px;font-weight:bold;color:#fff">拨打车主电话</div>
  <!-- red arrows -->
  <svg style="left:0;top:0" width="666" height="300" viewBox="1004 139 666 300"><path d="M1394 212.7L1557 211.8L1552 205.2L1576 217.7L1550.3 229.2L1556 222Z" fill="#ec1c24"/><path d="M1642.2 386.5L1632.4 264L1625 268.5L1636 243.5L1649.2 267.8L1641.8 264.5Z" fill="#ec1c24"/></svg>
  <!-- devtools -->
  <div class="abs dt" style="left:0;top:551px;width:666px;height:235px;background:#fff">
  </div>
  <div class="abs" style="left:0;top:552px;width:666px;height:33px;background:#eff2fa;border-bottom:1.5px solid #c9dbf8"></div>
  <div class="t dt" style="left:13px;top:559px">控制台</div>
  <div class="t dt" style="left:87px;top:559px">源代码/来源</div>
  <div class="t dt" style="left:197px;top:559px;color:#1558d6">网络</div>
  <div class="abs" style="left:183px;top:582.5px;width:59px;height:2px;background:#1558d6"></div>
  <div class="t dt" style="left:256px;top:559px">内存</div>
  <div class="t dt" style="left:314px;top:559px">分析器</div>
  <svg style="left:548px;top:561px" width="16" height="14" viewBox="0 0 16 14"><path d="M8 0.5L15.5 13.5H0.5Z" fill="#e8890c"/><path d="M8 5V9.5M8 10.8V12.2" stroke="#fff" stroke-width="1.4"/></svg>
  <div class="t dt" style="left:568px;top:560px;font-size:14.6px">1</div>
  <div class="abs" style="left:588.5px;top:558px;width:1.5px;height:20px;background:#cfe0fb"></div>
  <svg class="gear2" style="left:602px;top:557px" width="21" height="21" viewBox="-10.5 -10.5 21 21"><use href="#dgear"/></svg>
  <div class="abs" style="left:646px;top:560px;width:3.4px;height:3.4px;border-radius:50%;background:#333;box-shadow:0 6px 0 #333,0 12px 0 #333"></div>
  <!-- toolbar -->
  <div class="abs" style="left:0;top:617px;width:666px;height:1.5px;background:#d3e3fd"></div>
  <svg style="left:10px;top:591px" width="20" height="20" viewBox="0 0 20 20"><circle cx="10" cy="10" r="8.3" fill="none" stroke="#dc362e" stroke-width="1.7"/><rect x="6" y="6" width="8" height="8" rx="1" fill="#dc362e"/></svg>
  <svg style="left:45px;top:591px" width="20" height="20" viewBox="0 0 20 20" fill="none" stroke="#333" stroke-width="1.6"><circle cx="10" cy="10" r="8.3"/><path d="M4.2 15.8L15.8 4.2"/></svg>
  <div class="abs" style="left:77px;top:592px;width:1.5px;height:19px;background:#cfe0fb"></div>
  <svg style="left:93px;top:594px" width="16" height="15" viewBox="0 0 16 15"><path d="M0.3 0H15.7L9.6 8V15H6.4V8Z" fill="#1a66d6"/></svg>
  <svg style="left:126px;top:593px" width="18" height="18" viewBox="0 0 18 18" fill="none" stroke="#333" stroke-width="1.8"><circle cx="7" cy="7" r="5.3"/><path d="M11 11L17 17"/></svg>
  <div class="abs" style="left:158px;top:592px;width:1.5px;height:19px;background:#cfe0fb"></div>
  <div class="cb" style="left:172px;top:594px"></div>
  <div class="t dt" style="left:195px;top:593px">保留日志</div>
  <div class="abs" style="left:266px;top:592px;width:1.5px;height:19px;background:#cfe0fb"></div>
  <svg style="left:281px;top:592px" width="16" height="18" viewBox="0 0 16 18" fill="none" stroke="#333" stroke-width="1.6"><path d="M8 13V1.5M3.2 6L8 1.3L12.8 6M1 12V16.5H15V12"/></svg>
  <svg style="left:311px;top:592px" width="16" height="18" viewBox="0 0 16 18" fill="none" stroke="#333" stroke-width="1.6"><path d="M8 1V12.5M3.2 8L8 12.7L12.8 8M1 12V16.5H15V12"/></svg>
  <div class="abs" style="left:623.5px;top:592px;width:1.5px;height:19px;background:#cfe0fb"></div>
  <svg style="left:632px;top:591px" width="21" height="21" viewBox="-10.5 -10.5 21 21"><use href="#dgear"/></svg>
  <!-- filter row -->
  <div class="abs" style="left:4px;top:623px;width:204px;height:24px;border:1px solid #c7c7c7;border-radius:5px;background:#fff"></div>
  <div class="t dt" style="left:8px;top:628px;color:#757575">过滤</div>
  <div class="cb" style="left:224px;top:627px"></div><div class="t dt" style="left:247px;top:627px">反转</div>
  <div class="abs" style="left:290px;top:625px;width:1.5px;height:20px;background:#cfe0fb"></div>
  <div class="cb" style="left:307px;top:627px"></div><div class="t dt" style="left:329px;top:627px">隐藏数据网址</div>
  <div class="cb" style="left:438px;top:627px"></div><div class="t dt" style="left:460px;top:627px">隐藏扩展程序网址</div>
  <!-- chips -->
  <div class="chip" style="left:4px;width:43px;border-color:#d3e3fd;background:#d3e3fd">全部</div>
  <div class="abs" style="left:51.5px;top:657px;width:1.5px;height:20px;background:#cfe0fb"></div>
  <div class="chip" style="left:58.5px;width:41.5px">文档</div><div class="chip" style="left:105px;width:28px;font-size:13.8px;letter-spacing:0px">JS</div><div class="chip" style="left:138.5px;width:81.5px;font-size:13.7px;letter-spacing:0px">Fetch/XHR</div><div class="chip" style="left:225px;width:38px;font-size:13.2px;letter-spacing:-0.6px">CSS</div><div class="chip" style="left:268px;width:42.5px">字体</div><div class="chip" style="left:316px;width:41.5px">图片</div><div class="chip" style="left:363.5px;width:41.5px">媒体</div><div class="chip" style="left:411px;width:41.5px">清单</div><div class="chip" style="left:458px;width:35px;font-size:13.6px;letter-spacing:-0.3px">WS</div><div class="chip" style="left:499.5px;width:52.0px;font-size:13.4px;letter-spacing:0px">Wasm</div><div class="chip" style="left:558px;width:40.5px">其他</div>
  <div class="cb" style="left:9px;top:689px"></div><div class="t dt" style="left:32px;top:689px">被屏蔽的响应 Cookie</div>
  <div class="cb" style="left:190px;top:689px"></div><div class="t dt" style="left:213px;top:689px">被屏蔽的请求</div>
  <div class="cb" style="left:321px;top:689px"></div><div class="t dt" style="left:344px;top:689px">第三方请求</div>
  <!-- timeline -->
  <div class="abs" style="left:0;top:711px;width:666px;height:1.5px;background:#d3e3fd"></div>
  <div class="abs" style="left:122px;top:712px;width:1.5px;height:74px;background:#cfe0fb"></div><div class="t" style="left:42px;width:76px;text-align:right;top:720px;font-size:12px;color:#333">20 毫秒</div><div class="abs" style="left:245.5px;top:712px;width:1.5px;height:74px;background:#cfe0fb"></div><div class="t" style="left:165.5px;width:76px;text-align:right;top:720px;font-size:12px;color:#333">40 毫秒</div><div class="abs" style="left:369px;top:712px;width:1.5px;height:74px;background:#cfe0fb"></div><div class="t" style="left:289px;width:76px;text-align:right;top:720px;font-size:12px;color:#333">60 毫秒</div><div class="abs" style="left:492px;top:712px;width:1.5px;height:74px;background:#cfe0fb"></div><div class="t" style="left:412px;width:76px;text-align:right;top:720px;font-size:12px;color:#333">80 毫秒</div><div class="abs" style="left:615px;top:712px;width:1.5px;height:74px;background:#cfe0fb"></div><div class="t" style="left:535px;width:76px;text-align:right;top:720px;font-size:12px;color:#333">100 毫秒</div>
  <div class="abs" style="left:0;top:712px;width:2.5px;height:23px;background:#8a8a8a"></div>
  <div class="abs" style="left:663px;top:712px;width:2px;height:23px;background:#8a8a8a"></div>
</div>
<!-- PAGE SCROLLBAR -->
<div id="sb" class="abs" style="left:1670px;top:0;width:19px;height:925px;background:#fff">
  <svg style="left:3px;top:10px" width="13" height="10" viewBox="0 0 13 10"><path d="M6.5 0.5L13 9.5H0Z" fill="#8c8c8c" stroke="#8c8c8c" stroke-linejoin="round" stroke-width="1"/></svg>
  <div class="abs" style="left:4px;top:29px;width:10.6px;height:743px;border-radius:6px;background:#8c8c8c"></div>
  <svg style="left:3px;top:905px" width="13" height="10" viewBox="0 0 13 10"><path d="M6.5 9.5L13 0.5H0Z" fill="#8c8c8c" stroke="#8c8c8c" stroke-linejoin="round" stroke-width="1"/></svg>
</div>
<div class="abs" style="left:0;top:0;width:1689px;height:925px;border-radius:10px;box-shadow:0 0 0 20px #2e2f33;border-top:1px solid #e0e2e2;pointer-events:none;z-index:50"></div>
<div class="abs" style="left:0;top:8px;width:1px;height:891px;background:#c9c9c9;z-index:49"></div>
</body>
</html>
